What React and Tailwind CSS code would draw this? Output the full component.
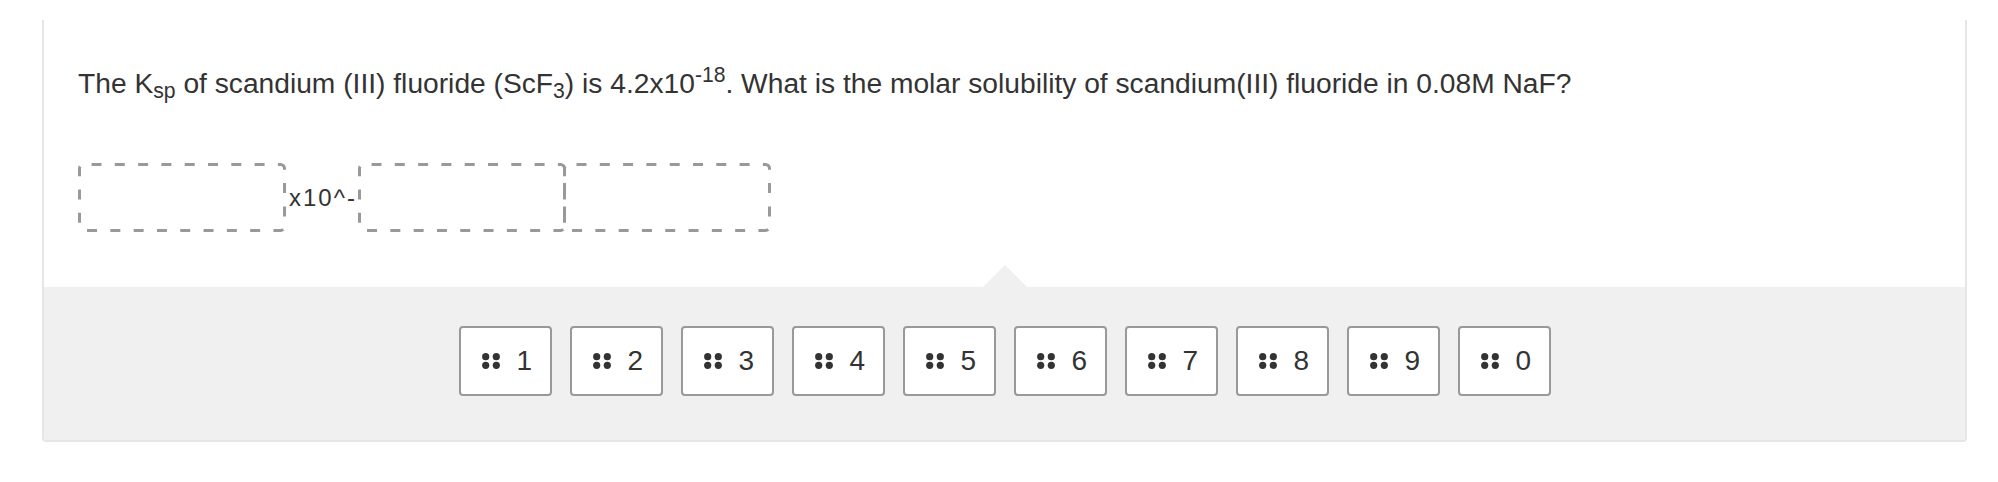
import React from "react";

const DIGITS = ["1", "2", "3", "4", "5", "6", "7", "8", "9", "0"];

function GripIcon() {
  return (
    <svg width="18" height="16" viewBox="0 0 18 16" className="shrink-0">
      <circle cx="3.7" cy="3.7" r="3.6" fill="#333" />
      <circle cx="14.3" cy="3.7" r="3.6" fill="#333" />
      <circle cx="3.7" cy="12.3" r="3.6" fill="#333" />
      <circle cx="14.3" cy="12.3" r="3.6" fill="#333" />
    </svg>
  );
}

// dashed outline drawn as svg so the dash length matches the picture
function DropBox({ className = "" }) {
  return (
    <div className={"relative w-[208px] h-[69px] shrink-0 " + className}>
      <svg className="absolute inset-0" width="208" height="69" viewBox="0 0 208 69">
        <rect
          x="1.5"
          y="1.5"
          width="205"
          height="66"
          rx="4"
          fill="none"
          stroke="#999"
          strokeWidth="3"
          strokeDasharray="10 13.3"
          strokeDashoffset="-8"
        />
      </svg>
    </div>
  );
}

export default function App() {
  return (
    <div className="w-[1998px] h-[482px] bg-white pt-[20px] font-['Liberation_Sans',Arial,sans-serif] text-[#333]">
      <div className="ml-[42px] w-[1925px] border-x-2 border-b-2 border-[#e6e6e6] rounded-b-[4px] overflow-hidden">
        <div className="relative bg-white pl-[34px] pt-[47px] pb-[55px]">
          <p className="text-[28.2px] leading-[32px]">
            The K<sub>sp</sub> of scandium (III) fluoride (ScF<sub>3</sub>) is 4.2x10
            <sup>-18</sup>. What is the molar solubility of scandium(III) fluoride in 0.08M NaF?
          </p>
          <div className="mt-[64px] flex items-center">
            <DropBox />
            <span className="text-[24px] leading-none pl-[3px] pr-[1px] tracking-[2px]">x10^-</span>
            <DropBox />
            <DropBox className="-ml-[3px]" />
          </div>
          <div className="absolute bottom-0 left-[939px] w-0 h-0 border-x-[22px] border-x-transparent border-b-[22px] border-b-[#f0f0f0]" />
        </div>
        <div className="bg-[#f0f0f0] pt-[39px] pb-[44px] flex justify-center gap-[18px]">
          {DIGITS.map((d) => (
            <div
              key={d}
              className="w-[93px] h-[70px] bg-white border-2 border-[#999] rounded-[4px] flex items-center pl-[21px] gap-[17px]"
            >
              <GripIcon />
              <span className="text-[28px] leading-none">{d}</span>
            </div>
          ))}
        </div>
      </div>
    </div>
  );
}
